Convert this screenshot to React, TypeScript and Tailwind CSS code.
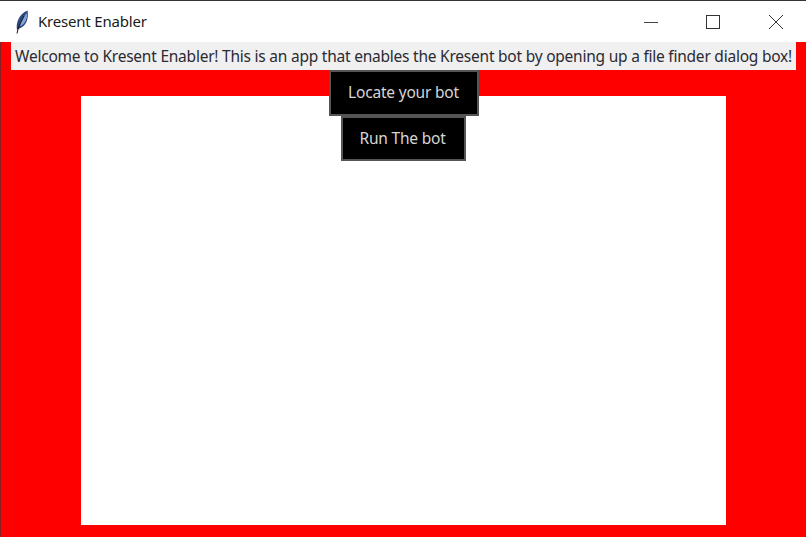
import React from 'react';

const Feather = () => (
  <svg width="16" height="26" viewBox="0 0 16 26">
    <path d="M3 21 C1.500 14 5 5 13.500 1.500 C15 9 12.500 17 5.500 19.500 Z" fill="#2f4a7c" />
    <path d="M6 17 C7 12 9.500 8 13 4 C13.500 9 11.500 14 7 17 Z" fill="#86a5da" />
    <path d="M3 24.500 L4.500 18 L10 7" stroke="#111827" strokeWidth="1" fill="none" />
  </svg>
);

export default function App() {
  return (
    <div className="w-[806px] h-[537px] overflow-hidden flex flex-col bg-white font-['Noto_Sans','Open_Sans',sans-serif]">
      {/* Title bar */}
      <div className="h-[42px] shrink-0 border-t border-[#333333] flex items-center pl-[14px] bg-white">
        <Feather />
        <span className="ml-[8px] text-[15px] tracking-[-0.2px] text-[#1a1a1a] leading-none">Kresent Enabler</span>
        <div className="ml-auto flex items-center">
          <div className="w-[62px] flex justify-center">
            <svg width="14" height="14" viewBox="0 0 14 14"><path d="M0 7.500H14" stroke="#444444" strokeWidth="1" /></svg>
          </div>
          <div className="w-[62px] flex justify-center">
            <svg width="14" height="14" viewBox="0 0 14 14"><rect x="0.500" y="0.500" width="13" height="13" fill="none" stroke="#333333" strokeWidth="1" /></svg>
          </div>
          <div className="w-[62px] flex justify-center pl-[2px]">
            <svg width="14" height="14" viewBox="0 0 14 14"><path d="M0 0L14 14M14 0L0 14" stroke="#333333" strokeWidth="1" /></svg>
          </div>
        </div>
      </div>

      {/* Window body */}
      <div className="relative flex-1 bg-[#ff0000] border-l border-[#8a2020] pl-[80px] pr-[80px] pt-[54px] pb-[12px]">
        <div className="h-full bg-white" />
        <div className="absolute inset-x-0 top-0 flex flex-col items-center">
          <div className="w-[785px] h-[28px] pt-[2px] bg-[#f0f0f0] flex items-center justify-center text-[15.5px] tracking-[-0.23px] text-[#2b2b33] whitespace-nowrap">
            Welcome to Kresent Enabler! This is an app that enables the Kresent bot by opening up a file finder dialog box!
          </div>
          <button className="w-[150px] h-[46px] bg-black border-2 border-[#555555] text-[15.5px] tracking-[-0.2px] text-[#d6d6d6]">Locate your bot</button>
          <button className="w-[125px] h-[45px] pr-[2px] bg-black border-2 border-[#555555] text-[15.5px] tracking-[-0.2px] text-[#d6d6d6]">Run The bot</button>
        </div>
      </div>
    </div>
  );
}
